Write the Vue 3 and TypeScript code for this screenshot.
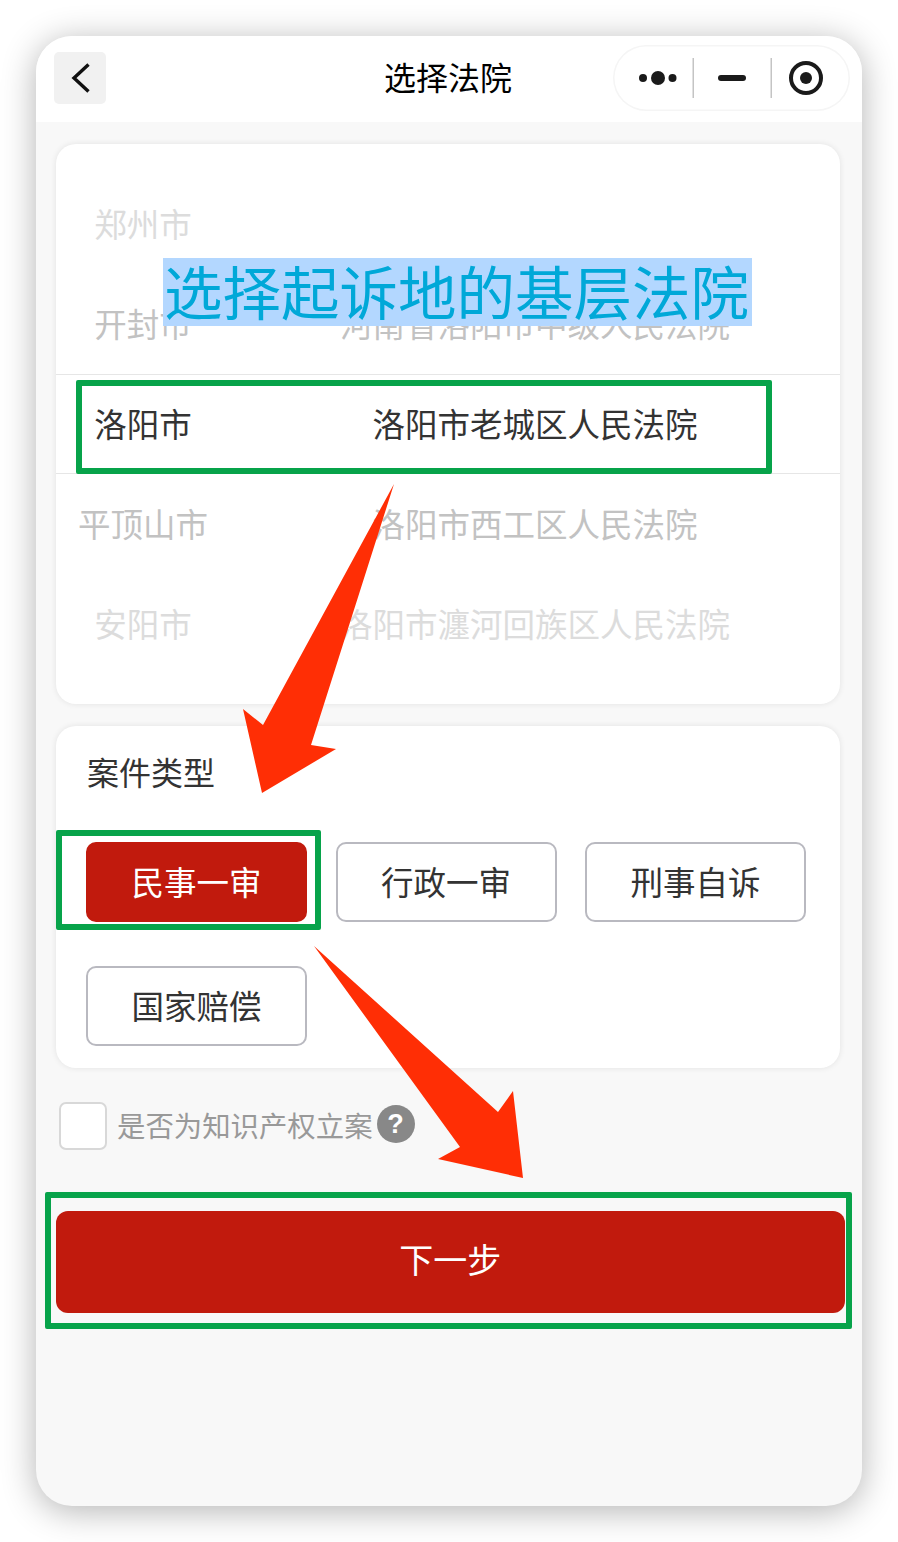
<script setup lang="ts">
interface Row { city: string; court: string; tone: string }
const rows: Row[] = [
  { city: '郑州市', court: '', tone: 'far' },
  { city: '开封市', court: '河南省洛阳市中级人民法院', tone: 'near' },
  { city: '洛阳市', court: '洛阳市老城区人民法院', tone: 'active' },
  { city: '平顶山市', court: '洛阳市西工区人民法院', tone: 'near' },
  { city: '安阳市', court: '洛阳市瀍河回族区人民法院', tone: 'far' },
]
const types: string[] = ['民事一审', '行政一审', '刑事自诉', '国家赔偿']
</script>

<template>
  <div class="stage">
    <div class="phone">
      <header class="nav">
        <div class="back">
          <svg width="20" height="32" viewBox="0 0 20 32"><path d="M18.500 2.500 L4 16 L18.500 29.500" fill="none" stroke="#111" stroke-width="3.400" /></svg>
        </div>
        <h1 class="title">选择法院</h1>
        <div class="capsule">
          <svg width="237" height="66" viewBox="0 0 237 66">
            <circle cx="30" cy="33" r="4" fill="#1a1a1a" />
            <circle cx="45" cy="33" r="7" fill="#1a1a1a" />
            <circle cx="59.500" cy="33" r="4" fill="#1a1a1a" />
            <rect x="79.500" y="13" width="1.500" height="40" fill="#c4c4c4" />
            <rect x="105" y="30" width="28" height="6" rx="3" fill="#1a1a1a" />
            <rect x="157.500" y="13" width="1.500" height="40" fill="#c4c4c4" />
            <circle cx="193" cy="33" r="15" fill="none" stroke="#1a1a1a" stroke-width="4" />
            <circle cx="193" cy="33" r="6" fill="#1a1a1a" />
          </svg>
        </div>
      </header>

      <main class="content">
        <section class="card picker">
          <div v-for="row in rows" :key="row.city" class="row" :class="row.tone">
            <span class="city">{{ row.city }}</span>
            <span class="court">{{ row.court }}</span>
          </div>
        </section>

        <section class="card kinds">
          <h2 class="kinds-title">案件类型</h2>
          <div class="kind-grid">
            <button v-for="(t, i) in types" :key="t" class="kind" :class="{ on: i === 0 }">{{ t }}</button>
          </div>
        </section>

        <div class="ip">
          <span class="check"></span>
          <span class="ip-text">是否为知识产权立案</span>
          <span class="help">?</span>
        </div>

        <button class="next">下一步</button>
      </main>
    </div>

    <div class="caption">选择起诉地的基层法院</div>
    <div class="box box-row"></div>
    <div class="box box-kind"></div>
    <div class="box box-next"></div>
    <svg class="arrows" width="898" height="1542" viewBox="0 0 898 1542">
      <polygon points="394,484 311,745 336,749 262,793 243,709 263,725" fill="#ff2e05" />
      <polygon points="314,946 498,1112 513,1091 523,1178 438,1159 460,1147" fill="#ff2e05" />
    </svg>
  </div>
</template>

<style scoped>
.stage {
  position: relative;
  width: 898px;
  height: 1542px;
  padding: 36px;
  box-sizing: border-box;
  background: #fff;
  font-family: "Noto Sans CJK SC", "Noto Sans", sans-serif;
}
.phone {
  width: 826px;
  height: 1470px;
  border-radius: 36px;
  background: #f8f8f8;
  box-shadow: 0 5px 34px rgba(0, 0, 0, 0.3);
  overflow: hidden;
}
.nav {
  position: relative;
  height: 86px;
  background: #fff;
  display: flex;
  align-items: center;
  justify-content: center;
}
.back {
  position: absolute;
  left: 18px;
  top: 16px;
  width: 52px;
  height: 52px;
  border-radius: 5px;
  background: #f1f1f1;
  display: flex;
  align-items: center;
  justify-content: center;
}
.title {
  margin: 0 2px 6px 0;
  font-size: 32px;
  font-weight: 400;
  line-height: 44px;
  color: #000;
}
.capsule {
  position: absolute;
  left: 577px;
  top: 9px;
  width: 237px;
  height: 66px;
  box-sizing: border-box;
  border-radius: 33px;
  box-shadow: inset 0 0 0 1.500px #f5f5f5;
}
.capsule svg { display: block; }
.content {
  padding: 22px 22px 0 20px;
}
.card {
  width: 784px;
  background: #fff;
  border-radius: 20px;
  box-shadow: 0 0 6px rgba(0, 0, 0, 0.09);
}
.picker {
  height: 560px;
  padding-top: 30px;
  box-sizing: border-box;
}
.row {
  height: 100px;
  display: flex;
  align-items: center;
  padding-bottom: 2px;
  font-size: 32.500px;
  line-height: 44px;
  box-sizing: border-box;
}
.row.active {
  color: #333;
  border-top: 1px solid #e6e6e6;
  border-bottom: 1px solid #e6e6e6;
}
.row.near { color: #c2c2c2; }
.row.far { color: #dcdcdc; }
.city {
  width: 174px;
  text-align: center;
}
.court {
  flex: 1;
  text-align: center;
}
.kinds {
  margin-top: 22px;
  height: 342px;
  padding: 23px 30px 0 31px;
  box-sizing: border-box;
}
.kinds-title {
  margin: 0 0 49px 0;
  font-size: 32px;
  font-weight: 400;
  line-height: 44px;
  color: #333;
}
.kind-grid {
  display: grid;
  grid-template-columns: repeat(3, 221px);
  column-gap: 28.500px;
  row-gap: 44px;
  margin-left: -1px;
}
.kind {
  height: 80px;
  padding: 0 0 4px;
  box-sizing: border-box;
  border: 2px solid #b9b9c0;
  border-radius: 10px;
  background: #fff;
  color: #333;
  font-family: inherit;
  font-size: 32.500px;
}
.kind.on {
  background: #c11a0d;
  border-color: #c11a0d;
  color: #fff;
}
.ip {
  margin: 34px 0 0 3px;
  height: 48px;
  display: flex;
  align-items: center;
}
.check {
  width: 48px;
  height: 48px;
  box-sizing: border-box;
  border: 2px solid #d8d8d8;
  border-radius: 7px;
  background: #fff;
}
.ip-text {
  margin: 0 0 2px 10px;
  font-size: 28.400px;
  line-height: 40px;
  color: #999;
}
.help {
  margin: 0 0 4px 4px;
  width: 38px;
  height: 38px;
  border-radius: 50%;
  background: #888;
  color: #fff;
  font-family: "Liberation Sans", sans-serif;
  font-size: 27px;
  font-weight: 700;
  line-height: 38px;
  text-align: center;
}
.next {
  display: block;
  margin-top: 61px;
  width: 788.500px;
  height: 102px;
  padding: 0 0 8px;
  border: none;
  border-radius: 12px;
  background: #c11a0d;
  color: #fff;
  font-family: inherit;
  font-size: 34px;
}
.caption {
  position: absolute;
  left: 163px;
  top: 258px;
  height: 68px;
  padding: 0 3px 0 1px;
  background: #b3d7ff;
  color: #00a8d8;
  font-size: 58.500px;
  line-height: 63px;
  white-space: nowrap;
}
.box {
  position: absolute;
  box-sizing: border-box;
  border: 6px solid #07a34a;
  border-radius: 2px;
}
.box-row { left: 76px; top: 380px; width: 696px; height: 94px; }
.box-kind { left: 56px; top: 830px; width: 265px; height: 100px; }
.box-next { left: 45px; top: 1192px; width: 807px; height: 137px; }
.arrows {
  position: absolute;
  left: 0;
  top: 0;
  pointer-events: none;
}
</style>

<style>
html, body { background: #fff; }
</style>
